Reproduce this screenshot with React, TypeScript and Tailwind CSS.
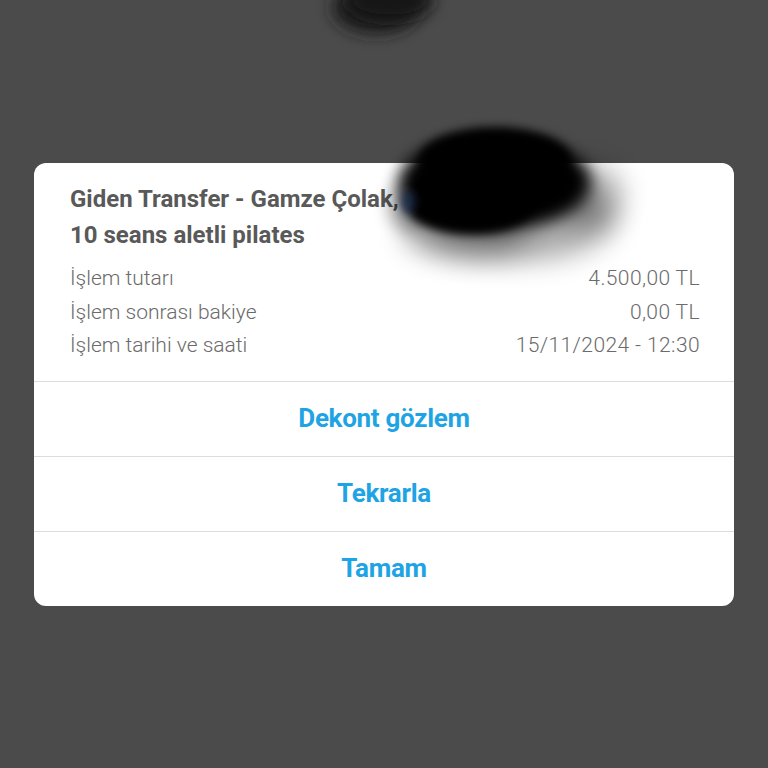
import React from "react";

const rows = [
  { label: "İşlem tutarı", value: "4.500,00 TL" },
  { label: "İşlem sonrası bakiye", value: "0,00 TL" },
  { label: "İşlem tarihi ve saati", value: "15/11/2024 - 12:30" },
];

const actions = ["Dekont gözlem", "Tekrarla", "Tamam"];

const Scribbles = () => (
  <svg
    className="pointer-events-none absolute inset-0"
    width="768"
    height="768"
    viewBox="0 0 768 768"
  >
    <defs>
      <filter id="wide" x="-50%" y="-50%" width="200%" height="200%">
        <feGaussianBlur stdDeviation="14" />
      </filter>
      <filter id="soft" x="-50%" y="-50%" width="200%" height="200%">
        <feGaussianBlur stdDeviation="8" />
      </filter>
      <filter id="softer" x="-50%" y="-50%" width="200%" height="200%">
        <feGaussianBlur stdDeviation="5" />
      </filter>
    </defs>
    {/* top blob */}
    <ellipse cx="376" cy="8" rx="44" ry="26" fill="#1e1e1e" filter="url(#soft)" />
    <ellipse cx="390" cy="0" rx="44" ry="20" fill="#141414" filter="url(#soft)" />
    {/* main redaction: grey halo */}
    <ellipse cx="515" cy="218" rx="100" ry="42" fill="#000" opacity="0.35" filter="url(#wide)" />
    <ellipse cx="590" cy="195" rx="32" ry="30" fill="#000" opacity="0.3" filter="url(#wide)" />
    <ellipse cx="465" cy="232" rx="62" ry="26" fill="#000" opacity="0.3" filter="url(#wide)" />
    <ellipse cx="410" cy="205" rx="22" ry="26" fill="#000" opacity="0.35" filter="url(#soft)" />
    {/* black core */}
    <ellipse cx="495" cy="182" rx="96" ry="48" fill="#000" filter="url(#soft)" />
    <ellipse cx="495" cy="160" rx="76" ry="32" fill="#000" filter="url(#softer)" />
    <ellipse cx="470" cy="204" rx="64" ry="30" fill="#000" filter="url(#softer)" />
    <ellipse cx="408" cy="202" rx="7" ry="11" fill="#24365a" opacity="0.8" filter="url(#softer)" />
  </svg>
);

export default function App() {
  return (
    <div
      className="relative flex h-[768px] w-[768px] items-start justify-center overflow-hidden bg-[#4b4b4b] pt-[163px]"
      style={{ fontFamily: "Roboto, 'Liberation Sans', sans-serif" }}
    >
      <div className="w-[700px] overflow-hidden rounded-[12px] bg-white">
        <div className="pl-[36px] pr-[34px] pt-[18px] pb-[18px]">
          <div className="text-[24px] font-bold leading-[36px] text-[#595959]">
            <div>Giden Transfer - Gamze Çolak,</div>
            <div>10 seans aletli pilates</div>
          </div>
          <div className="mt-[9px] flex flex-col">
            {rows.map((r) => (
              <div
                key={r.label}
                className="flex items-center justify-between text-[21px] font-light leading-[33.5px] text-[#6b6b6b]"
              >
                <span>{r.label}</span>
                <span className="tracking-[0.4px]">{r.value}</span>
              </div>
            ))}
          </div>
        </div>
        {actions.map((a) => (
          <div
            key={a}
            className="flex h-[75px] items-center justify-center border-t border-[#dcdcdc] text-[26px] font-bold tracking-[-0.3px] text-[#1ea4e4]"
          >
            {a}
          </div>
        ))}
      </div>
      <Scribbles />
    </div>
  );
}
